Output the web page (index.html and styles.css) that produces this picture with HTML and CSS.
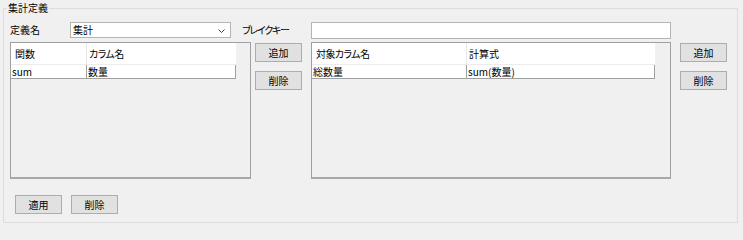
FILE: index.html
```html
<!DOCTYPE html>
<html lang="ja">
<head>
<meta charset="utf-8">
<title>集計定義</title>
<link rel="stylesheet" href="styles.css">
</head>
<body>
<fieldset class="group">
  <legend class="group-title">集計定義</legend>
  <div class="group-body">
    <div class="row-top">
      <span class="label label-name">定義名</span>
      <div class="combo">
        <span class="combo-text">集計</span>
        <svg class="combo-arrow" width="7" height="4" viewBox="0 0 7 4"><polyline points="0.5,0.5 3.5,3.5 6.5,0.5" fill="none" stroke="#404040" stroke-width="1"/></svg>
      </div>
      <span class="label label-break">ブレイクキー</span>
      <div class="textbox"></div>
    </div>
    <div class="row-mid">
      <div class="listview lv-left">
        <div class="lv-table">
          <div class="lv-head">
            <div class="hc c1">関数</div>
            <div class="hc c2 kana">カラム名</div>
          </div>
          <div class="lv-row">
            <div class="rc c1">sum</div>
            <div class="rc c2">数量</div>
          </div>
        </div>
      </div>
      <div class="btn-col btn-col-left">
        <button class="btn">追加</button>
        <button class="btn">削除</button>
      </div>
      <div class="listview lv-right">
        <div class="lv-table">
          <div class="lv-head">
            <div class="hc c1 kana">対象カラム名</div>
            <div class="hc c2">計算式</div>
          </div>
          <div class="lv-row">
            <div class="rc c1">総数量</div>
            <div class="rc c2">sum(数量)</div>
          </div>
        </div>
      </div>
      <div class="btn-col btn-col-right">
        <button class="btn">追加</button>
        <button class="btn">削除</button>
      </div>
    </div>
    <div class="row-bottom">
      <button class="btn">適用</button>
      <button class="btn">削除</button>
    </div>
  </div>
</fieldset>
</body>
</html>
```
FILE: styles.css
```css
* { box-sizing: border-box; }
html, body {
  margin: 0;
  padding: 0;
  background: #f0f0f0;
}
body {
  width: 743px;
  height: 224px;
  overflow: hidden;
  font-family: "Noto Sans CJK JP", "Noto Sans", sans-serif;
  font-size: 10px;
  color: #000;
  font-feature-settings: "palt";
}
.group {
  margin: 0 5px 0 3px;
  padding: 0;
  border: 1px solid #dcdcdc;
  min-width: 0;
}
.group-title {
  margin-left: 3px;
  padding: 0 1px;
  line-height: 16px;
  height: 16px;
}
.group-body {
  padding: 6px 0 8px 6px;
}
.row-top {
  display: flex;
  align-items: flex-start;
  height: 17px;
}
.label {
  line-height: 16px;
  white-space: nowrap;
}
.label-name { width: 60px; }
.label-break { width: 69px; margin-left: 11px; letter-spacing: -1.3px; }
.kana { letter-spacing: -0.6px; }
.combo {
  width: 161px;
  height: 16px;
  background: #fff;
  border: 1px solid #b4b4b4;
  display: flex;
  align-items: center;
  padding: 0 5px 0 2px;
}
.combo-text { line-height: 14px; }
.combo-arrow { margin-left: auto; margin-top: 1px; }
.textbox {
  width: 360px;
  height: 17px;
  background: #fff;
  border: 1px solid #b4b4b4;
}
.row-mid {
  display: flex;
  align-items: flex-start;
  margin-top: 3px;
}
.listview {
  height: 137px;
  border: 1px solid #a0a0a0;
  border-bottom: 2px solid #a8a8a8;
  background: #f0f0f0;
}
.lv-left { width: 241px; }
.lv-right { width: 360px; margin-left: 9px; }
.lv-table { display: flex; flex-direction: column; }
.lv-left .lv-table { width: 225px; }
.lv-right .lv-table { width: 343px; }
.lv-head {
  display: flex;
  height: 22px;
  background: #fff;
  border-bottom: 1px solid #ececec;
}
.hc {
  line-height: 21px;
  white-space: nowrap;
}
.lv-head .c1 {
  border-right: 1px solid #e5e5e5;
  padding-left: 4px;
}
.lv-head .c2 { flex: 1; padding-left: 2px; }
.lv-left .c1 { width: 76px; }
.lv-right .c1 { width: 155px; }
.lv-row {
  display: flex;
  height: 14px;
  background: #fff;
  border-bottom: 1px solid #a0a0a0;
  border-right: 1px solid #a0a0a0;
}
.rc {
  line-height: 13px;
  white-space: nowrap;
  padding-left: 1px;
}
.lv-row .c1 { border-right: 1px solid #a0a0a0; }
.lv-row .c2 { flex: 1; }
.btn-col {
  display: flex;
  flex-direction: column;
  gap: 9px;
  padding-top: 1px;
}
.btn-col-left { margin-left: 4px; }
.btn-col-right { margin-left: 9px; }
.btn {
  width: 47px;
  height: 19px;
  margin: 0;
  padding: 0;
  background: #e1e1e1;
  border: 1px solid #adadad;
  font-family: inherit;
  font-size: 10px;
  font-feature-settings: "palt";
  color: #000;
  line-height: 17px;
  text-align: center;
}
.row-bottom {
  display: flex;
  gap: 9px;
  margin-top: 16px;
  padding-left: 5px;
}
```
